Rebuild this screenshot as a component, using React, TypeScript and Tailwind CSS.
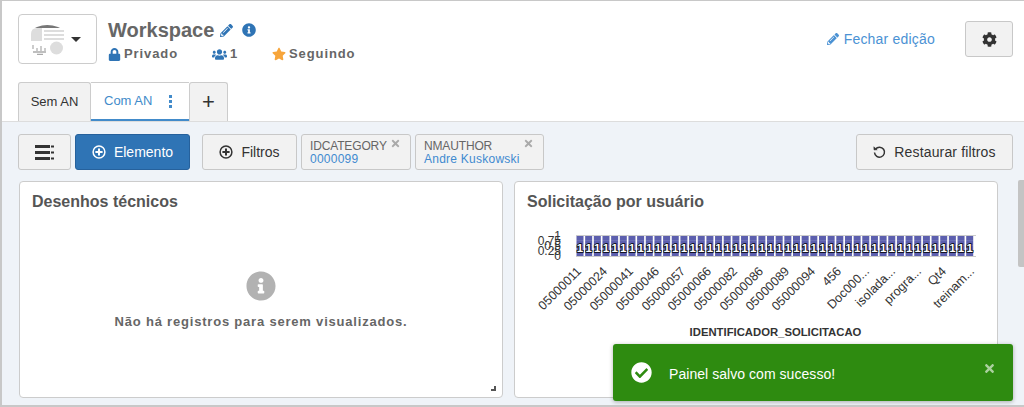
import { FaCheckCircle, FaCog, FaInfoCircle, FaLock, FaPencilAlt, FaStar, FaTimes, FaUsers } from "react-icons/fa"

const font = "font-['Liberation_Sans',Arial,sans-serif]"

const values = Array.from({ length: 46 }, (_, i) => i)
const labels = [
  ["05000011", 582],
  ["05000024", 608],
  ["05000041", 634],
  ["05000046", 660],
  ["05000057", 686],
  ["05000066", 712],
  ["05000082", 738],
  ["05000086", 764],
  ["05000089", 790],
  ["05000094", 816],
  ["456", 842],
  ["Doc000...", 870],
  ["isolada...", 896],
  ["progra...", 922],
  ["Qt4", 947],
  ["treinam...", 975],
] as const

function WorkspaceLogo() {
  return (
    <svg width="33" height="31" viewBox="0 0 33 31">
      <path d="M6 3 Q16 -1 27 3 L29 4 H4 Z" fill="#777" />
      <path d="M0 10 Q0 4 6 4 H11 V17 H0 Z" fill="#ddd" />
      <path d="M13 7 H33 M13 11 H33 M13 15 H33" stroke="#ddd" strokeWidth="2" />
      <path d="M2 21 V25 M6 24 V27 M10 22 V27 M14 24 V27" stroke="#ccc" strokeWidth="2" />
      <path d="M2 28 H15 M6 30.5 H12" stroke="#aaa" strokeWidth="1.5" />
      <circle cx="25.5" cy="24" r="6.5" fill="#ddd" />
    </svg>
  )
}

function PlusCircle() {
  return (
    <svg width="14" height="14" viewBox="0 0 14 14" fill="none" stroke="currentColor" strokeWidth="1.5">
      <circle cx="7" cy="7" r="5.9" />
      <path d="M7 3.4 V10.6 M3.4 7 H10.6" strokeWidth="2" />
    </svg>
  )
}

function MenuLines() {
  return (
    <svg width="19" height="15" viewBox="0 0 19 15" fill="#333">
      <rect x="0" y="0" width="15" height="3" />
      <rect x="0" y="6" width="15" height="3" />
      <rect x="0" y="12" width="15" height="3" />
      <rect x="16" y="0.5" width="3" height="2" />
      <rect x="16" y="6.5" width="3" height="2" />
      <rect x="16" y="12.5" width="3" height="2" />
    </svg>
  )
}

function Restore() {
  return (
    <svg width="13" height="13" viewBox="0 0 13 13" fill="none" stroke="#333" strokeWidth="1.5">
      <path d="M2.6 3 A5 5 0 1 1 1.5 6.5" />
      <path d="M0.8 0.8 L1 4 L4.2 3.8 Z" fill="#333" strokeWidth="0.5" />
    </svg>
  )
}

function Chip({ name, value, width }: { name: string; value: string; width: string }) {
  return (
    <div className={`${width} h-9 relative rounded-[3px] border border-[#c8c8c8] bg-[#f2f2f2] pl-[8px] pt-[4px] text-[12px]`}>
      <div className="leading-[14px] tracking-[-0.15px] text-[#666]">{name}</div>
      <div className="leading-[12px] tracking-[0.25px] text-[#3f8ad0]">{value}</div>
      <FaTimes className="absolute right-[9px] top-[3px] text-[#aaa]" size={11} />
    </div>
  )
}

function Chart() {
  return (
    <svg width="484" height="130" viewBox="514 225 484 130" className="block">
      <g fontFamily="Liberation Sans" fontSize="12" fill="#333" textAnchor="end">
        <text x="561" y="240">1</text>
        <text x="561" y="245">0.75</text>
        <text x="561" y="250">0.5</text>
        <text x="561" y="255">0.25</text>
        <text x="561" y="260">0</text>
      </g>
      {values.map((i) => (
        <rect key={i} x={576.5 + i * 8.66} y={236} width={7} height={20} fill="#5c5fae" />
      ))}
      <path d="M576 235.5 H976 M576 256.5 H976" stroke="#ccc" />
      <path d="M576 240.5 H976 M576 245.5 H976 M576 250.5 H976" stroke="#fff" strokeOpacity="0.1" />
      <g fontFamily="Liberation Sans" fontSize="11.5" fontWeight="bold" fill="#fff" stroke="#000" strokeWidth="1.6" paintOrder="stroke" textAnchor="middle">
        {values.map((i) => (
          <text key={i} x={580 + i * 8.66} y={252}>1</text>
        ))}
      </g>
      <g fontFamily="Liberation Sans" fontSize="12.5" fill="#333" textAnchor="end">
        {labels.map(([label, x]) => (
          <text key={label} x={x} y={272} transform={`rotate(-45 ${x} 272)`}>{label}</text>
        ))}
      </g>
      <text x="775.5" y="336" fontFamily="Liberation Sans" fontSize="11.3" fontWeight="bold" fill="#333" textAnchor="middle">IDENTIFICADOR_SOLICITACAO</text>
    </svg>
  )
}

export default function App() {
  return (
    <div className={`${font} relative w-[1024px] h-[407px] overflow-hidden bg-[#eff3f8] border-t border-l-2 border-b-2 border-[#c8c8c8] text-[#333]`}>
      <div className="h-[120px] bg-white border-b border-[#ddd] box-content">
        <div className="flex h-[81px] pl-[16px] pr-[11px]">
          <div className="mt-[13px] w-[79px] h-[50px] rounded-[4px] border border-[#ccc] flex items-center pl-[12px] gap-[7px]">
            <WorkspaceLogo />
            <span className="w-0 h-0 border-x-[5px] border-x-transparent border-t-[5px] border-t-[#333]" />
          </div>
          <div className="ml-[11px] mt-[17px]">
            <div className="flex items-center h-[24px] text-[#666]">
              <span className="text-[20px] font-bold">Workspace</span>
              <FaPencilAlt className="ml-[6px] text-[#2f74b5]" size={13} />
              <FaInfoCircle className="ml-[9px] text-[#2f74b5]" size={14} />
            </div>
            <div className="flex items-center h-[20px] mt-[2px] text-[13px] font-bold tracking-[0.9px] text-[#666]">
              <FaLock className="text-[#2f74b5]" size={13} />
              <span className="ml-[3px] w-[84px]">Privado</span>
              <FaUsers className="ml-[4px] text-[#2f74b5]" size={15} />
              <span className="ml-[3px] w-[42px]">1</span>
              <FaStar className="text-[#f7a53b]" size={14} />
              <span className="ml-[3px]">Seguindo</span>
            </div>
          </div>
          <div className="ml-auto mt-[20px] flex h-[36px] items-center">
            <FaPencilAlt className="text-[#4b92d4]" size={12} />
            <span className="ml-[5px] text-[14px] tracking-[0.2px] text-[#4b92d4]">Fechar edição</span>
            <button className="ml-[30px] w-[48px] h-[36px] rounded-[3px] border border-[#c8c8c8] bg-[#f2f2f2] flex items-center justify-center">
              <FaCog className="text-[#333]" size={15} />
            </button>
          </div>
        </div>
        <div className="flex h-[39px] pl-[16px] text-[13px]">
          <div className="w-[73px] rounded-t-[3px] border border-b-0 border-[#ccc] bg-[#f2f2f2] flex items-center justify-center">Sem AN</div>
          <div className="w-[98px] border-t border-[#ccc] border-b-[2px] border-b-[#428bca] bg-white flex items-center pl-[13px] text-[#428bca]">
            <span>Com AN</span>
            <span className="ml-[17px] flex flex-col gap-[2px]">
              <span className="w-[3px] h-[3px] bg-[#428bca]" />
              <span className="w-[3px] h-[3px] bg-[#428bca]" />
              <span className="w-[3px] h-[3px] bg-[#428bca]" />
            </span>
          </div>
          <div className="w-[39px] rounded-t-[3px] border border-b-0 border-[#ccc] bg-[#f2f2f2] flex items-center justify-center text-[22px] font-light leading-none">+</div>
        </div>
      </div>
      <div className="flex h-[36px] mt-[12px] pl-[16px] pr-[11px] text-[14px]">
        <button className="w-[53px] rounded-[3px] border border-[#c8c8c8] bg-[#f2f2f2] flex items-center justify-center"><MenuLines /></button>
        <button className="ml-[4px] w-[115px] rounded-[3px] border border-[#26619c] bg-[#2f74b5] text-white flex items-center justify-center gap-[8px]"><PlusCircle />Elemento</button>
        <button className="ml-[12px] w-[95px] rounded-[3px] border border-[#c8c8c8] bg-[#f2f2f2] flex items-center justify-center gap-[8px]"><PlusCircle />Filtros</button>
        <div className="ml-[4px] flex gap-[4px]">
          <Chip name="IDCATEGORY" value="0000099" width="w-[110px]" />
          <Chip name="NMAUTHOR" value="Andre Kuskowski" width="w-[129px]" />
        </div>
        <button className="ml-auto w-[157px] rounded-[3px] border border-[#c8c8c8] bg-[#f2f2f2] tracking-[0.15px] flex items-center justify-center gap-[8px]"><Restore />Restaurar filtros</button>
      </div>
      <div className="flex gap-[11px] mt-[11px] pl-[17px]">
        <section className="relative w-[484px] h-[217px] rounded-[4px] border border-[#ccc] bg-white">
          <h2 className="pl-[12px] pt-[10px] text-[16px] leading-[20px] font-bold text-[#555]">Desenhos técnicos</h2>
          <div className="mt-[59px] flex flex-col items-center">
            <FaInfoCircle className="text-[#b2b2b2]" size={30} />
            <p className="mt-[11px] text-[13px] font-bold tracking-[0.8px] text-[#666]">Não há registros para serem visualizados.</p>
          </div>
          <span className="absolute right-[6px] bottom-[6px] w-[5px] h-[5px] border-r-2 border-b-2 border-[#555]" />
        </section>
        <section className="w-[484px] h-[217px] rounded-[4px] border border-[#ccc] bg-white overflow-hidden">
          <h2 className="pl-[12px] pt-[10px] text-[16px] leading-[20px] font-bold text-[#555]">Solicitação por usuário</h2>
          <div className="-ml-px mt-[13px]"><Chart /></div>
        </section>
      </div>
      <div className="absolute right-0 top-[179px] w-[6px] h-[87px] rounded-l-[2px] bg-[#c4c4c4]" />
      <div className="absolute left-[611px] top-[343px] w-[400px] h-[57px] rounded-[3px] bg-[#2e8b10] shadow-[0_1px_4px_rgba(0,0,0,0.3)] flex items-center text-white">
        <FaCheckCircle className="ml-[18px]" size={21} />
        <span className="ml-[17px] pt-[3px] text-[14px] tracking-[0.05px]">Painel salvo com sucesso!</span>
        <FaTimes className="absolute right-[17px] top-[18px] text-white/60" size={13} />
      </div>
    </div>
  )
}
